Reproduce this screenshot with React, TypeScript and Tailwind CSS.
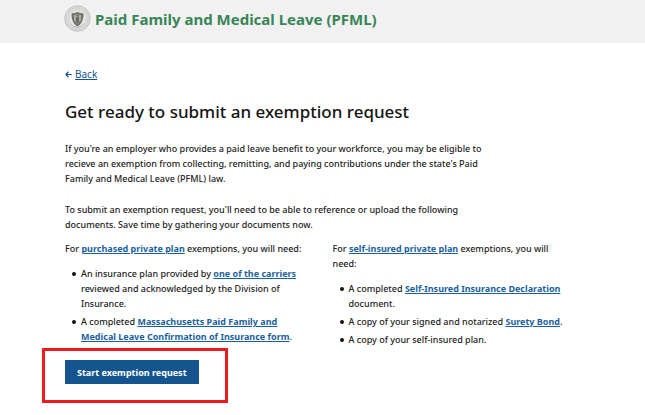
import type { ReactNode } from "react";

function Seal() {
  return (
    <svg viewBox="0 0 54 54" className="size-[27px] shrink-0" role="img" aria-label="Seal of the Commonwealth of Massachusetts">
      <circle cx="27" cy="27" r="25.5" fill="#e6e6e5" stroke="#b4b4b2" strokeWidth="1.6" />
      <circle cx="27" cy="27" r="21.5" fill="none" stroke="#c6c6c4" strokeWidth="4" strokeDasharray="2 1.6" />
      <circle cx="27" cy="27" r="17.5" fill="#e6e6e5" stroke="#c2c2c0" strokeWidth="1.2" />
      <path d="M16 16c4 1 7 0 11-2 4 2 7 3 11 2l1 5c-1 10-4 17-12 22-8-5-11-12-12-22z" fill="#6f6f6d" />
      <path d="M19.500 19c3 .5 5-.5 7.500-2 2.500 1.500 4.500 2.500 7.500 2-.2 9-2 15-7.500 19-5.500-4-7.300-10-7.500-19z" fill="#989896" />
      <path d="M27 18.500a2 2 0 1 1 0 4 2 2 0 0 1 0-4zM24.500 23.500h5l.8 6-1.300 6h-4l-1.300-6z" fill="#686866" />
      <path d="M22 21v12M32 21v12" stroke="#d6d6d4" strokeWidth="1.500" />
      <path d="M13 37c3 5 8 7 14 8 6-1 11-3 14-8" fill="none" stroke="#bcbcba" strokeWidth="2" />
    </svg>
  );
}

function TextLink({ children }: { children: ReactNode }) {
  return (
    <a href="#" className="font-bold text-[#1d5f9c] underline">
      {children}
    </a>
  );
}

function Requirements({ children }: { children: ReactNode }) {
  return <ul className="mt-[10px] flex flex-col gap-[3px] pr-4 pl-[7px]">{children}</ul>;
}

function Requirement({ children }: { children: ReactNode }) {
  return (
    <li className="flex gap-[5px] before:mt-[6px] before:size-1 before:shrink-0 before:rounded-full before:bg-[#141414]">
      <p>{children}</p>
    </li>
  );
}

export default function App() {
  return (
    <div className="bg-white font-['Noto_Sans',sans-serif] text-[9px] leading-[15px] font-medium text-[#222222]">
      <header className="flex h-[43px] items-start gap-1 bg-[#f1f1f1] px-16 pt-[5px]">
        <Seal />
        <p className="text-[15px] leading-7 font-bold text-[#388557]">Paid Family and Medical Leave (PFML)</p>
      </header>
      <main className="px-[65px] pt-6">
        <a href="#" className="inline-flex items-center gap-[3px] text-[10px] font-normal text-[#14558f]">
          <svg viewBox="0 0 14 14" className="size-[7px]" fill="none" stroke="currentColor" strokeWidth="2.4" aria-hidden="true">
            <path d="M7 1.500 1.800 7 7 12.500M2 7h11.500" />
          </svg>
          <span className="underline">Back</span>
        </a>
        <h1 className="mt-4 text-[17px] leading-7 font-medium text-[#141414]">Get ready to submit an exemption request</h1>
        <div className="mt-[15px] flex max-w-[430px] flex-col gap-4">
          <p>
            If you're an employer who provides a paid leave benefit to your workforce, you may be eligible to recieve an
            exemption from collecting, remitting, and paying contributions under the state's Paid Family and Medical
            Leave (PFML) law.
          </p>
          <p>
            To submit an exemption request, you'll need to be able to reference or upload the following documents. Save
            time by gathering your documents now.
          </p>
        </div>
        <div className="mt-[9px] grid grid-cols-2 gap-5">
          <section>
            <p>
              For <TextLink>purchased private plan</TextLink> exemptions, you will need:
            </p>
            <Requirements>
              <Requirement>
                An insurance plan provided by <TextLink>one of the carriers</TextLink> reviewed and acknowledged by the
                Division of Insurance.
              </Requirement>
              <Requirement>
                A completed{" "}
                <TextLink>Massachusetts Paid Family and Medical Leave Confirmation of Insurance form</TextLink>.
              </Requirement>
            </Requirements>
          </section>
          <section>
            <p className="pr-4">
              For <TextLink>self-insured private plan</TextLink> exemptions, you will need:
            </p>
            <Requirements>
              <Requirement>
                A completed <TextLink>Self-Insured Insurance Declaration</TextLink> document.
              </Requirement>
              <Requirement>
                A copy of your signed and notarized <TextLink>Surety Bond</TextLink>.
              </Requirement>
              <Requirement>A copy of your self-insured plan.</Requirement>
            </Requirements>
          </section>
        </div>
        <div className="mt-px -ml-[23px] w-fit border-[3px] border-[#ee1c1f] pt-[9px] pr-[26px] pb-4 pl-5">
          <button type="button" className="h-6 bg-[#14558f] px-3 font-bold text-white">
            Start exemption request
          </button>
        </div>
      </main>
    </div>
  );
}
